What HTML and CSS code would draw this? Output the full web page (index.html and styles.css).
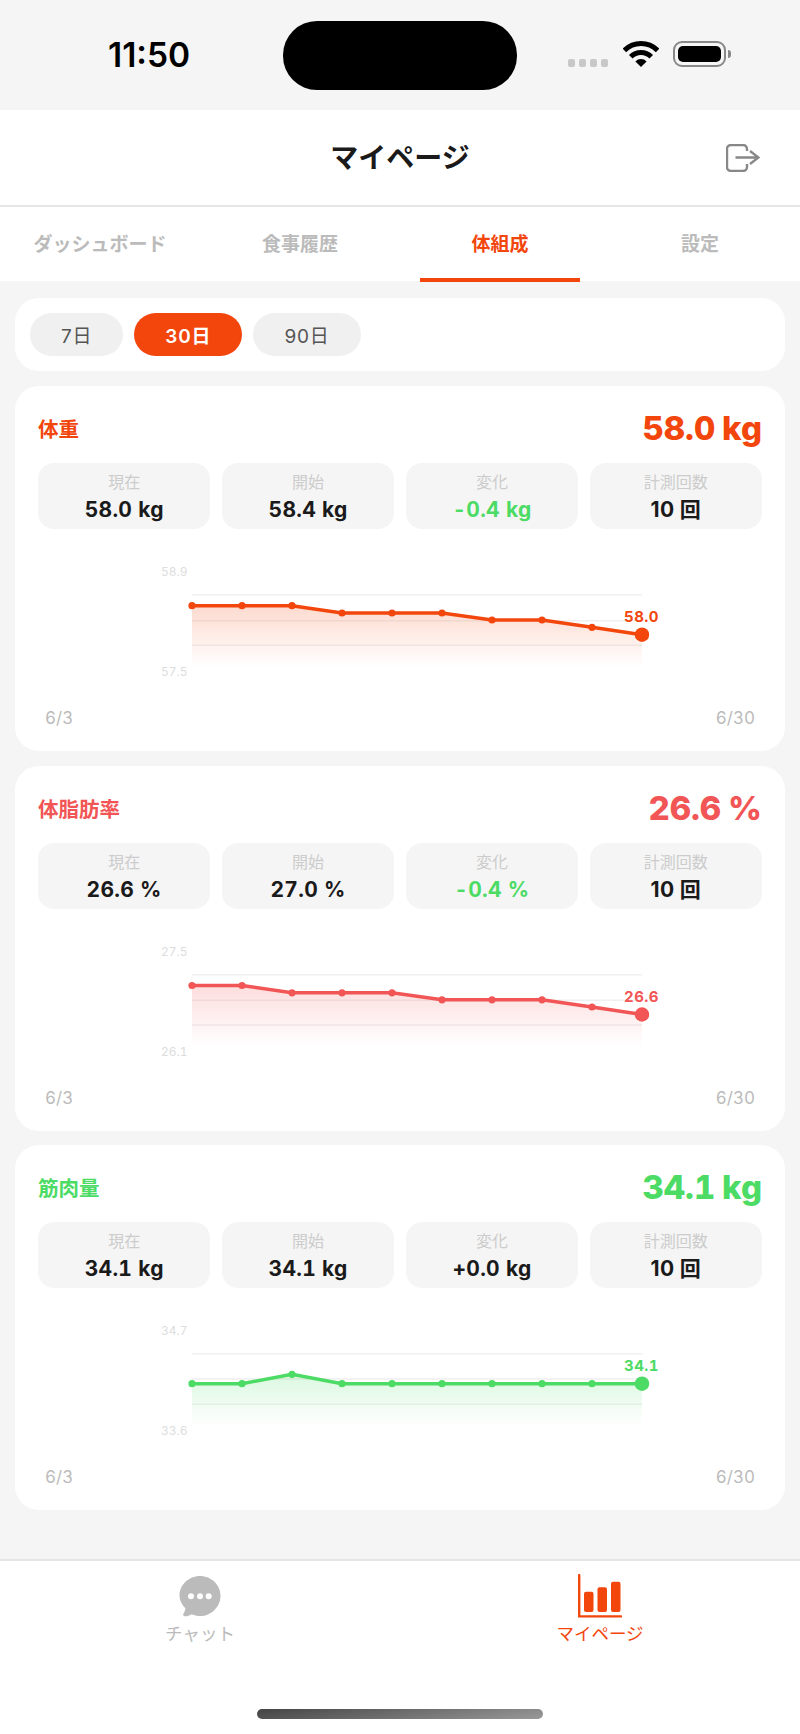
FILE: index.html
```html
<!DOCTYPE html>
<html lang="ja">
<head>
    <meta charset="UTF-8">
    <meta name="viewport" content="width=device-width, initial-scale=1.0">
    <title>マイページ</title>
    <link rel="stylesheet" href="styles.css">
</head>
<body>
    <div class="status-bar">
        <div class="time">11:50</div>
        <div class="island"></div>
        <div class="status-icons">
            <div class="cell-dots"><span></span><span></span><span></span><span></span></div>
            <svg class="wifi" width="36" height="26" viewBox="0 0 36 26">
                <path class="wifi-arc" d="M1.4 9.4A23.5 23.5 0 0 1 34.6 9.4"/>
                <path class="wifi-arc" d="M7.75 15.75A14.5 14.5 0 0 1 28.25 15.75"/>
                <path d="M18 26L12.4 20.4A8 8 0 0 1 23.6 20.4Z"/>
            </svg>
            <div class="battery"><div class="battery-level"></div></div>
            <div class="battery-cap"></div>
        </div>
    </div>

    <header class="header">
        <h1>マイページ</h1>
        <svg class="logout" width="34" height="28" viewBox="0 0 34 28">
            <path d="M21 7V5a4 4 0 0 0-4-4H5a4 4 0 0 0-4 4V23a4 4 0 0 0 4 4H17a4 4 0 0 0 4-4V20"/>
            <path d="M9.5 13.5H32.5M24 7L32.5 13.5L24 20"/>
        </svg>
    </header>

    <nav class="tabs">
        <div class="tab">ダッシュボード</div>
        <div class="tab">食事履歴</div>
        <div class="tab active">体組成</div>
        <div class="tab">設定</div>
    </nav>

    <main class="content">
        <div class="period-card">
            <button class="period">7日</button>
            <button class="period selected">30日</button>
            <button class="period">90日</button>
        </div>

        <section class="card weight">
            <div class="card-head">
                <h2>体重</h2>
                <div class="big-value">58.0 kg</div>
            </div>
            <div class="stats">
                <div class="stat"><div class="stat-label">現在</div><div class="stat-value">58.0 kg</div></div>
                <div class="stat"><div class="stat-label">開始</div><div class="stat-value">58.4 kg</div></div>
                <div class="stat"><div class="stat-label">変化</div><div class="stat-value good">-0.4 kg</div></div>
                <div class="stat"><div class="stat-label">計測回数</div><div class="stat-value count">10 回</div></div>
            </div>
            <svg class="chart" width="724" height="150" viewBox="0 0 724 150">
                <defs>
                    <linearGradient id="fade-weight" x1="0" y1="0" x2="0" y2="1">
                        <stop class="fade-top" offset="0"/>
                        <stop class="fade-bottom" offset="1"/>
                    </linearGradient>
                </defs>
                <text class="axis" x="149.5" y="26">58.9</text>
                <text class="axis" x="149.5" y="126">57.5</text>
                <path class="grid-line" d="M154 44.7H604M154 70.7H604M154 95.3H604"/>
                <path fill="url(#fade-weight)" d="M154 55.7L204 55.7L254 55.7L304 63L354 63L404 63L454 70L504 70L554 77.3L604 84.7V117H154Z"/>
                <path class="line" d="M154 55.7L204 55.7L254 55.7L304 63L354 63L404 63L454 70L504 70L554 77.3L604 84.7"/>
                <g class="dots">
                    <circle cx="154" cy="55.7" r="3.6"/><circle cx="204" cy="55.7" r="3.6"/><circle cx="254" cy="55.7" r="3.6"/>
                    <circle cx="304" cy="63" r="3.6"/><circle cx="354" cy="63" r="3.6"/><circle cx="404" cy="63" r="3.6"/>
                    <circle cx="454" cy="70" r="3.6"/><circle cx="504" cy="70" r="3.6"/><circle cx="554" cy="77.3" r="3.6"/>
                    <circle cx="604" cy="84.7" r="7.2"/>
                </g>
                <text class="last-value" x="603.5" y="72">58.0</text>
            </svg>
            <div class="dates"><span>6/3</span><span>6/30</span></div>
        </section>

        <section class="card fat">
            <div class="card-head">
                <h2>体脂肪率</h2>
                <div class="big-value">26.6 %</div>
            </div>
            <div class="stats">
                <div class="stat"><div class="stat-label">現在</div><div class="stat-value">26.6 %</div></div>
                <div class="stat"><div class="stat-label">開始</div><div class="stat-value">27.0 %</div></div>
                <div class="stat"><div class="stat-label">変化</div><div class="stat-value good">-0.4 %</div></div>
                <div class="stat"><div class="stat-label">計測回数</div><div class="stat-value count">10 回</div></div>
            </div>
            <svg class="chart" width="724" height="150" viewBox="0 0 724 150">
                <defs>
                    <linearGradient id="fade-fat" x1="0" y1="0" x2="0" y2="1">
                        <stop class="fade-top" offset="0"/>
                        <stop class="fade-bottom" offset="1"/>
                    </linearGradient>
                </defs>
                <text class="axis" x="149.5" y="26">27.5</text>
                <text class="axis" x="149.5" y="126">26.1</text>
                <path class="grid-line" d="M154 44.7H604M154 70.2H604M154 95H604"/>
                <path fill="url(#fade-fat)" d="M154 55.5L204 55.5L254 62.8L304 62.8L354 62.8L404 69.8L454 69.8L504 69.8L554 77L604 84.5V116.5H154Z"/>
                <path class="line" d="M154 55.5L204 55.5L254 62.8L304 62.8L354 62.8L404 69.8L454 69.8L504 69.8L554 77L604 84.5"/>
                <g class="dots">
                    <circle cx="154" cy="55.5" r="3.6"/><circle cx="204" cy="55.5" r="3.6"/><circle cx="254" cy="62.8" r="3.6"/>
                    <circle cx="304" cy="62.8" r="3.6"/><circle cx="354" cy="62.8" r="3.6"/><circle cx="404" cy="69.8" r="3.6"/>
                    <circle cx="454" cy="69.8" r="3.6"/><circle cx="504" cy="69.8" r="3.6"/><circle cx="554" cy="77" r="3.6"/>
                    <circle cx="604" cy="84.5" r="7.2"/>
                </g>
                <text class="last-value" x="603.5" y="72">26.6</text>
            </svg>
            <div class="dates"><span>6/3</span><span>6/30</span></div>
        </section>

        <section class="card muscle">
            <div class="card-head">
                <h2>筋肉量</h2>
                <div class="big-value">34.1 kg</div>
            </div>
            <div class="stats">
                <div class="stat"><div class="stat-label">現在</div><div class="stat-value">34.1 kg</div></div>
                <div class="stat"><div class="stat-label">開始</div><div class="stat-value">34.1 kg</div></div>
                <div class="stat"><div class="stat-label">変化</div><div class="stat-value">+0.0 kg</div></div>
                <div class="stat"><div class="stat-label">計測回数</div><div class="stat-value count">10 回</div></div>
            </div>
            <svg class="chart" width="724" height="150" viewBox="0 0 724 150">
                <defs>
                    <linearGradient id="fade-muscle" x1="0" y1="0" x2="0" y2="1">
                        <stop class="fade-top" offset="0"/>
                        <stop class="fade-bottom" offset="1"/>
                    </linearGradient>
                </defs>
                <text class="axis" x="149.5" y="25.5">34.7</text>
                <text class="axis" x="149.5" y="125.5">33.6</text>
                <path class="grid-line" d="M154 44.7H604M154 70H604M154 95.3H604"/>
                <path fill="url(#fade-muscle)" d="M154 74.7L204 74.7L254 65.3L304 74.7L354 74.7L404 74.7L454 74.7L504 74.7L554 74.7L604 74.7V117H154Z"/>
                <path class="line" d="M154 74.7L204 74.7L254 65.3L304 74.7L354 74.7L404 74.7L454 74.7L504 74.7L554 74.7L604 74.7"/>
                <g class="dots">
                    <circle cx="154" cy="74.7" r="3.6"/><circle cx="204" cy="74.7" r="3.6"/><circle cx="254" cy="65.3" r="3.6"/>
                    <circle cx="304" cy="74.7" r="3.6"/><circle cx="354" cy="74.7" r="3.6"/><circle cx="404" cy="74.7" r="3.6"/>
                    <circle cx="454" cy="74.7" r="3.6"/><circle cx="504" cy="74.7" r="3.6"/><circle cx="554" cy="74.7" r="3.6"/>
                    <circle cx="604" cy="74.7" r="7.2"/>
                </g>
                <text class="last-value" x="603.5" y="62.3">34.1</text>
            </svg>
            <div class="dates"><span>6/3</span><span>6/30</span></div>
        </section>
    </main>

    <footer class="tabbar">
        <div class="tabbar-items">
            <div class="tabbar-item">
                <svg class="tabbar-icon" width="44" height="44" viewBox="0 0 44 44">
                    <path class="chat-bubble" d="M22 2C33.3 2 42.5 10.9 42.5 21.7C42.5 32.8 33.3 42 22 42C19 42 16.2 41.4 13.7 40.2C11.4 41.6 9 42.4 6.7 42.2C5.2 42 4.7 40.7 5.5 39.5C6.4 38.2 7.1 36.3 7.4 34.2C3.8 30.6 1.5 26.3 1.5 21.7C1.5 10.9 10.7 2 22 2Z"/>
                    <circle class="chat-dot" cx="13" cy="22.3" r="3"/>
                    <circle class="chat-dot" cx="22" cy="22.3" r="3"/>
                    <circle class="chat-dot" cx="30.7" cy="22.3" r="3"/>
                </svg>
                <span>チャット</span>
            </div>
            <div class="tabbar-item active">
                <svg class="tabbar-icon" width="44" height="44" viewBox="0 0 44 44">
                    <path class="chart-axis" d="M1.2 1V42.4H43"/>
                    <rect x="6" y="17.7" width="9.5" height="20.3" rx="2"/>
                    <rect x="19.5" y="13.3" width="9.5" height="24.7" rx="2"/>
                    <rect x="33" y="7.7" width="9.5" height="30.3" rx="2"/>
                </svg>
                <span>マイページ</span>
            </div>
        </div>
        <div class="home-bar"></div>
    </footer>
</body>
</html>
```

FILE: styles.css
```css
* {
    margin: 0;
    padding: 0;
    box-sizing: border-box;
}

body {
    display: flex;
    flex-direction: column;
    height: 1734px;
    background-color: #f5f5f5;
    color: #1a1a1a;
    font-family: Inter, "Noto Sans CJK JP", sans-serif;
    font-variant-numeric: tabular-nums;
}

/* status bar */
.status-bar {
    display: grid;
    grid-template-columns: 283px 234px 1fr;
    height: 110px;
}

.time {
    padding: 34px 0 0 108px;
    font-size: 33.5px;
    line-height: 42px;
    font-weight: 600;
    font-variant-numeric: normal;
    color: #000;
}

.island {
    height: 69px;
    margin-top: 21px;
    border-radius: 34px;
    background-color: #000;
}

.status-icons {
    display: flex;
    align-items: flex-start;
    padding: 41px 0 0 51px;
}

.cell-dots {
    display: flex;
    gap: 4px;
    margin: 18px 15px 0 0;
}

.cell-dots span {
    width: 7px;
    height: 8px;
    border-radius: 2px;
    background-color: #c8c8c8;
}

.wifi path {
    fill: #000;
}

.wifi .wifi-arc {
    fill: none;
    stroke: #000;
    stroke-width: 5;
}

.battery {
    width: 53px;
    height: 26px;
    margin-left: 14px;
    padding: 3px;
    border: 2px solid #888;
    border-radius: 9px;
}

.battery-level {
    height: 100%;
    border-radius: 5px;
    background-color: #000;
}

.battery-cap {
    width: 3px;
    height: 8px;
    margin: 9px 0 0 2px;
    border-radius: 0 3px 3px 0;
    background-color: #888;
}

/* header */
.header {
    display: grid;
    grid-template-columns: 1fr auto 1fr;
    align-items: center;
    height: 97px;
    padding-right: 40px;
    border-bottom: 2px solid #e5e5e5;
    background-color: #fff;
}

.header h1 {
    grid-column: 2;
    margin: -4px 0 0 40px;
    font-size: 28px;
    font-weight: 700;
}

.logout {
    justify-self: end;
    fill: none;
    stroke: #888;
    stroke-width: 2.4;
}

/* tabs */
.tabs {
    display: grid;
    grid-template-columns: repeat(4, 1fr);
    height: 74px;
    background-color: #fff;
}

.tab {
    padding-top: 1px;
    line-height: 74px;
    font-size: 19px;
    font-weight: 700;
    text-align: center;
    white-space: nowrap;
    color: #bbb;
}

.tab.active {
    color: #f2460d;
    background: linear-gradient(#f2460d, #f2460d) center bottom / 160px 4px no-repeat;
}

/* content */
.content {
    display: flex;
    flex-direction: column;
    gap: 14.5px;
    padding: 17px 15px 0;
}

.period-card {
    display: flex;
    gap: 11px;
    height: 73px;
    margin-bottom: .5px;
    padding: 15px;
    border-radius: 24px;
    background-color: #fff;
}

.period {
    height: 43px;
    padding: 0 31px;
    border: none;
    border-radius: 22px;
    background-color: #f0f0f0;
    color: #555;
    font-family: inherit;
    font-size: 19px;
    letter-spacing: .8px;
}

.period.selected {
    background-color: #f2460d;
    color: #fff;
    font-weight: 600;
}

.card {
    padding: 20px 23px 21px;
    border-radius: 24px;
    background-color: #fff;
}

.weight {
    color: #f2460d;
}

.fat {
    color: #f25555;
}

.muscle {
    color: #4cdb64;
}

.card-head {
    display: flex;
    justify-content: space-between;
    align-items: center;
    height: 44px;
    margin-bottom: 13px;
}

.card-head h2 {
    font-size: 20.5px;
    font-weight: 700;
}

.big-value {
    font-size: 33px;
    font-weight: 800;
    word-spacing: -2px;
}

.stats {
    display: grid;
    grid-template-columns: repeat(4, 1fr);
    gap: 11.5px;
}

.stat {
    height: 66px;
    padding-top: 7px;
    border-radius: 16px;
    background-color: #f5f5f5;
    text-align: center;
}

.stat-label {
    font-size: 16px;
    line-height: 24px;
    color: #ccc;
}

.stat-value {
    margin-top: 2px;
    font-size: 21px;
    line-height: 28px;
    font-weight: 700;
    letter-spacing: .3px;
    color: #1a1a1a;
}

.stat-value.good {
    color: #4cdb64;
}

.stat-value.count {
    font-variant-numeric: normal;
}

/* charts */
.chart {
    display: block;
    margin-top: 21px;
}

.axis {
    font-size: 12px;
    text-anchor: end;
    fill: #ddd;
}

.grid-line {
    fill: none;
    stroke: #f0f0f0;
    stroke-width: 1.5;
}

.fade-top {
    stop-color: currentColor;
    stop-opacity: .2;
}

.fade-bottom {
    stop-color: currentColor;
    stop-opacity: 0;
}

.line {
    fill: none;
    stroke: currentColor;
    stroke-width: 3.4;
}

.dots {
    fill: currentColor;
}

.last-value {
    font-size: 15px;
    font-weight: 700;
    letter-spacing: .5px;
    text-anchor: middle;
    fill: currentColor;
}

.dates {
    display: flex;
    justify-content: space-between;
    margin-top: 6px;
    padding: 0 7px;
    font-size: 17px;
    line-height: 24px;
    color: #bbb;
}

/* bottom tabs */
.tabbar {
    margin-top: auto;
    padding-bottom: 15px;
    border-top: 2px solid #e5e5e5;
    background-color: #fff;
}

.tabbar-items {
    display: grid;
    grid-template-columns: 1fr 1fr;
    padding-top: 13px;
}

.tabbar-item {
    display: flex;
    flex-direction: column;
    align-items: center;
    gap: 4px;
    font-size: 17.5px;
    line-height: 24px;
    color: #bbb;
}

.tabbar-item.active {
    color: #f2460d;
}

.tabbar-icon {
    display: block;
    fill: currentColor;
}

.chat-dot {
    fill: #fff;
}

.chart-axis {
    fill: none;
    stroke: currentColor;
    stroke-width: 2.4;
    stroke-linecap: round;
}

.home-bar {
    width: 286px;
    height: 10px;
    margin: 63px auto 0;
    border-radius: 5px;
    background: linear-gradient(170deg, #444, #999);
}
```
